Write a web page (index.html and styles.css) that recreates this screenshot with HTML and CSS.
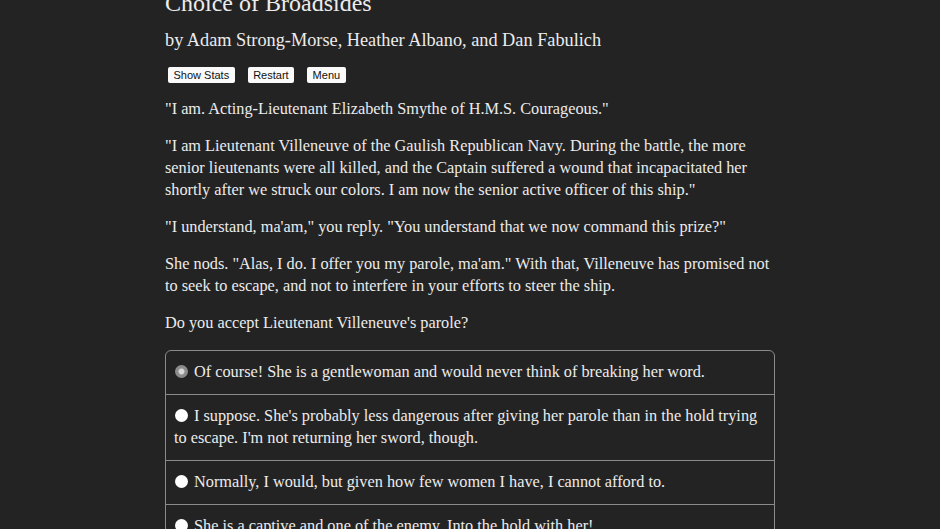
FILE: index.html
```html
<!DOCTYPE html>
<html>
<head>
<meta charset="utf-8">
<link rel="stylesheet" href="styles.css">
</head>
<body>
<main class="page">
  <h1 class="title">Choice of Broadsides</h1>
  <h2 class="byline">by Adam Strong-Morse, Heather Albano, and Dan Fabulich</h2>
  <div class="buttons">
    <button class="btn">Show Stats</button>
    <button class="btn">Restart</button>
    <button class="btn">Menu</button>
  </div>
  <p>"I am. Acting-Lieutenant Elizabeth Smythe of H.M.S. Courageous."</p>
  <p>"I am Lieutenant Villeneuve of the Gaulish Republican Navy. During the battle, the more senior lieutenants were all killed, and the Captain suffered a wound that incapacitated her shortly after we struck our colors. I am now the senior active officer of this ship."</p>
  <p>"I understand, ma'am," you reply. "You understand that we now command this prize?"</p>
  <p>She nods. "Alas, I do. I offer you my parole, ma'am." With that, Villeneuve has promised not to seek to escape, and not to interfere in your efforts to steer the ship.</p>
  <p>Do you accept Lieutenant Villeneuve's parole?</p>
  <div class="choices">
    <div class="choice"><span class="radio selected"></span>Of course! She is a gentlewoman and would never think of breaking her word.</div>
    <div class="choice"><span class="radio"></span>I suppose. She's probably less dangerous after giving her parole than in the hold trying to escape. I'm not returning her sword, though.</div>
    <div class="choice"><span class="radio"></span>Normally, I would, but given how few women I have, I cannot afford to.</div>
    <div class="choice"><span class="radio"></span>She is a captive and one of the enemy. Into the hold with her!</div>
  </div>
</main>
</body>
</html>
```
FILE: styles.css
```css
html, body {
  margin: 0;
  padding: 0;
  background: #232323;
  overflow: hidden;
}
.page {
  width: 610px;
  margin: 0 0 0 165px;
  color: #ececec;
  font-family: "Liberation Serif", "Times New Roman", serif;
  font-size: 16.3px;
  line-height: 22px;
}
.title {
  font-size: 24px;
  font-weight: normal;
  margin: -12px 0 0 0;
  line-height: 30px;
}
.byline {
  font-size: 18.3px;
  font-weight: normal;
  margin: 9px 0 0 0;
  line-height: 26px;
}
.buttons {
  display: flex;
  gap: 13px;
  margin: 14px 0 0 3px;
}
.btn {
  font-family: "Liberation Sans", Arial, sans-serif;
  font-size: 11px;
  line-height: 14px;
  height: 16px;
  padding: 0 5.5px;
  border: none;
  border-radius: 2px;
  background: #fafafa;
  color: #111;
}
p {
  margin: 15px 0 0 0;
}
.choices {
  margin-top: 16px;
  border: 1px solid #8a8a8a;
  border-radius: 6px;
}
.choice {
  padding: 10px 8px 11px 8px;
  border-top: 1px solid #8a8a8a;
}
.choice:first-child {
  border-top: none;
}
.radio {
  display: inline-block;
  width: 13px;
  height: 13px;
  border-radius: 50%;
  background: #fff;
  margin: 0 6px 0 1px;
  vertical-align: -1px;
  box-sizing: border-box;
}
.radio.selected {
  background: radial-gradient(circle, #d8d8d8 0 2.5px, #8c8c8c 3.5px);
}
```
